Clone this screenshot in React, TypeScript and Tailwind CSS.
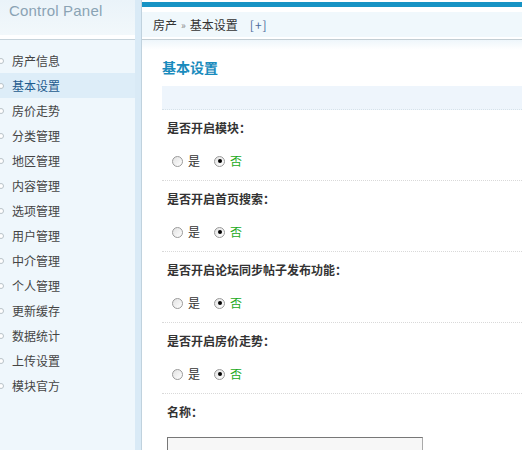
import React from "react"

const menu = [
  "房产信息",
  "基本设置",
  "房价走势",
  "分类管理",
  "地区管理",
  "内容管理",
  "选项管理",
  "用户管理",
  "中介管理",
  "个人管理",
  "更新缓存",
  "数据统计",
  "上传设置",
  "模块官方",
]

const options = ["是否开启模块：", "是否开启首页搜索：", "是否开启论坛同步帖子发布功能：", "是否开启房价走势："]

function Radio({ checked }: { checked?: boolean }) {
  return (
    <span className="w-[11px] h-[11px] rounded-full border border-[#9a9a9a] bg-gradient-to-br from-[#e2e2e2] to-white flex items-center justify-center">
      {checked && <span className="w-[4px] h-[4px] rounded-full bg-black" />}
    </span>
  )
}

export default function App() {
  return (
    <div
      className="flex w-[522px] h-[450px] overflow-hidden bg-white text-[12px] text-[#333]"
      style={{ fontFamily: '"Noto Sans CJK SC", "Liberation Sans", sans-serif' }}
    >
      {/* Sidebar */}
      <aside className="w-[135px] shrink-0 bg-[#eff7fc]">
        <div className="h-[35px] bg-gradient-to-b from-[#eaf3f9] to-[#f2f8fb] pl-[9px]">
          <span className="text-[15px] text-[#8aa3b4] tracking-[0.2px]" style={{ fontFamily: '"Liberation Sans", sans-serif' }}>
            Control Panel
          </span>
        </div>
        <div className="h-[4px] bg-white" />
        <div className="h-[1px] bg-[#c6d3db]" />
        <ul className="pt-[8px]">
          {menu.map((m) => (
            <li
              key={m}
              className={`h-[25px] flex items-center pl-[12px] relative text-[12px] ${
                m === "基本设置" ? "bg-[#ddedf8] text-[#1e5b8e]" : "text-[#444]"
              }`}
            >
              <span className="absolute left-[-2px] w-[6px] h-[6px] rounded-full border border-[#b8c2c8] bg-white" />
              {m}
            </li>
          ))}
        </ul>
      </aside>
      <div className="w-[6px] shrink-0 bg-[#d9eaf6]" />
      <div className="w-[1px] shrink-0 bg-[#c0d2de]" />

      {/* Main */}
      <main className="flex-1 min-w-0">
        <div className="h-[2px]" />
        <div className="h-[5px] bg-[#1793c4]" />
        <div className="h-[5px]" />
        <div className="h-[25px] bg-[#f0f8fc] flex items-center pl-[11px] gap-[4px] text-[12px]">
          <span>房产</span>
          <span className="text-[10px] text-[#888]">»</span>
          <span>基本设置</span>
          <span className="ml-[8px] text-[#4b6b9b] tracking-[1px]">[+]</span>
        </div>
        <div className="h-[2px]" />
        <div className="h-[1px] bg-[#c3ced4]" />
        <div className="h-[10px] bg-gradient-to-b from-[#eef6fb] to-white" />

        <section className="pl-[20px]">
          <h2 className="text-[14px] font-bold text-[#1a8bbd] leading-[18px] mt-[8px]">基本设置</h2>
          <div className="h-[24px] mt-[10px] bg-[#eef5fc] border-b border-dotted border-[#d6e2ea]" />

          {options.map((o) => (
            <div key={o} className="h-[71px] border-b border-dotted border-[#d9d9d9] pl-[5px]">
              <div className="pt-[10px] font-bold text-[#333] leading-[16px]">{o}</div>
              <div className="flex items-center mt-[17px] pl-[5px] h-[16px]">
                <Radio />
                <span className="ml-[5px] text-[#333]">是</span>
                <span className="ml-[14px]">
                  <Radio checked />
                </span>
                <span className="ml-[5px] text-[#22aa22]">否</span>
              </div>
            </div>
          ))}

          <div className="pl-[5px]">
            <div className="pt-[10px] font-bold text-[#333] leading-[16px]">名称：</div>
            <div className="mt-[17px] w-[256px] h-[24px] bg-[#f7f7f7] border border-[#aaa] border-t-[#777] border-l-[#777]" />
          </div>
        </section>
      </main>
    </div>
  )
}
